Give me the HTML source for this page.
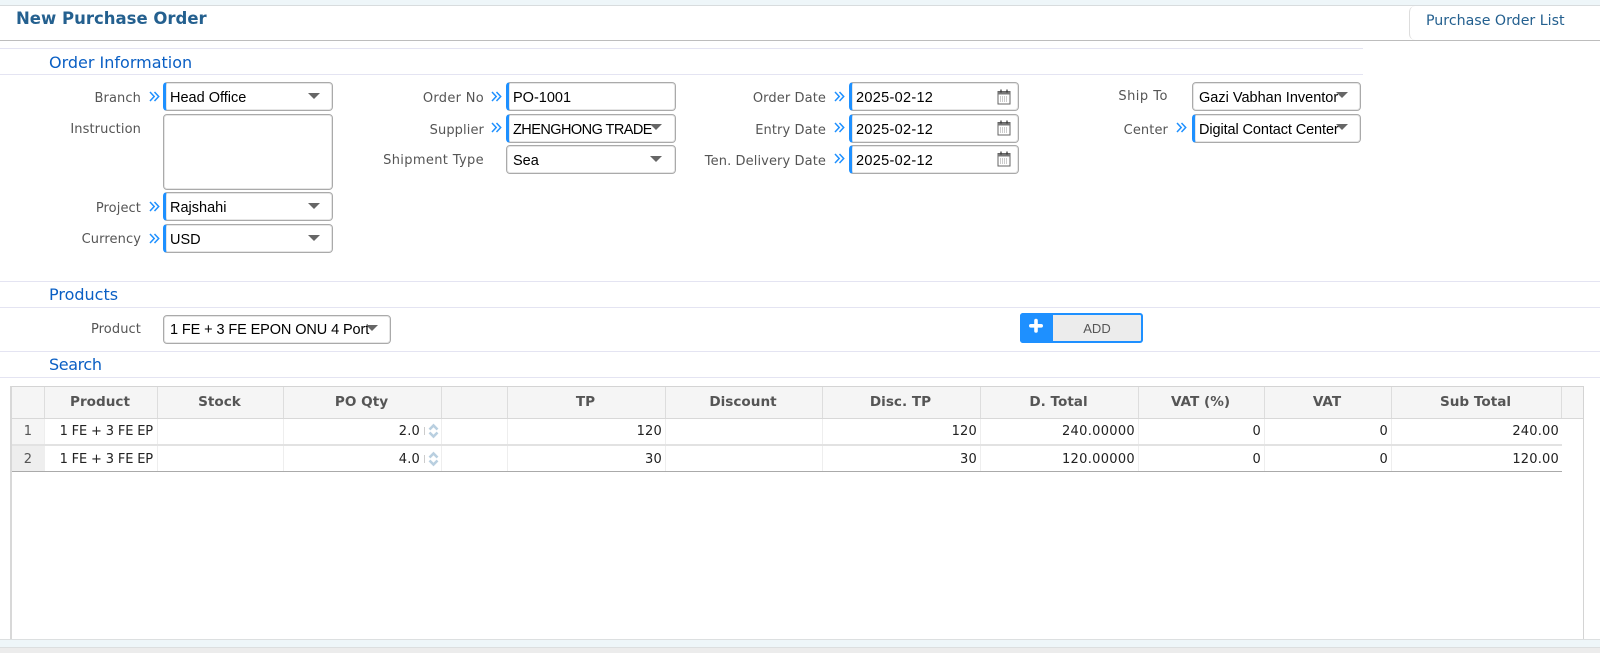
<!DOCTYPE html>
<html><head><meta charset="utf-8"><style>
html,body{margin:0;padding:0;width:1600px;height:653px;overflow:hidden;background:#fff}
div,span,svg{position:absolute;box-sizing:border-box}
.l{font:13px "DejaVu Sans",sans-serif;color:#555;text-align:right;white-space:nowrap;height:16px;line-height:16px;letter-spacing:.1px}
.hr{height:1px;background:#e4e4f2;left:0;width:1363px}
.sec{font:16px "DejaVu Sans",sans-serif;color:#0a5fc4;left:49px;white-space:nowrap;line-height:18px;height:18px}
.s{background:#fff;border:1px solid #aaa;border-radius:4px;box-shadow:inset 0 0 0 1px #e6e6e6;height:29px;font:14.5px "Liberation Sans",sans-serif;color:#000;line-height:30px;padding-left:6px;white-space:nowrap;overflow:hidden}
.r{border-left:3px solid #1e90ff;padding-left:4px}
.c{width:0;height:0;border-left:6.5px solid transparent;border-right:6.5px solid transparent;border-top:6px solid #666}
.a{width:11px;height:11px}
.th{top:387px;height:31px;font:bold 13.6px "DejaVu Sans",sans-serif;color:#555;text-align:center;line-height:31px;background:#f5f5f5;border-right:1px solid #ddd;padding-right:2px}
.td{height:25px;font:13px "DejaVu Sans",sans-serif;color:#222;line-height:25px;text-align:right;padding-right:3px;border-right:1px solid #eee;white-space:nowrap;overflow:hidden;letter-spacing:.2px}
.d{letter-spacing:.3px}
.p{letter-spacing:-.15px;padding-right:4px}
</style></head><body>
<svg width="0" height="0" style="position:absolute"><defs>
<symbol id="ar" viewBox="0 0 11 11"><path d="M1 1L5.2 5.5L1 10M5.5 1L9.7 5.5L5.5 10" fill="none" stroke="#1e90ff" stroke-width="1.5"/></symbol>
<symbol id="cal" viewBox="0 0 14 16"><path d="M1 2.5H13V15H1Z" fill="#fff" stroke="#666" stroke-width="1"/><path d="M1 3H13V5.5H1Z" fill="#777"/><path d="M4 .5V3.5M10 .5V3.5" stroke="#333" stroke-width="1.2"/><path d="M3 8H11M3 10H11M3 12H11" stroke="#999" stroke-width="1" stroke-dasharray="1 1"/></symbol>
<symbol id="sp" viewBox="0 0 11 16"><path d="M1.5 6.5L5.5 2.5L9.5 6.5M1.5 9.5L5.5 13.5L9.5 9.5" fill="none" stroke="#b9cfe0" stroke-width="2.6"/></symbol>
</defs></svg>

<!-- top strip and header -->
<div style="left:0;top:0;width:1600px;height:5px;background:#eef6f9"></div>
<div style="left:0;top:5px;width:1600px;height:1px;background:#d8dcde"></div>
<div style="left:0;top:40px;width:1600px;height:1px;background:#bdbdbd"></div>
<div style="left:16px;top:9px;font:bold 16.5px 'DejaVu Sans',sans-serif;color:#24608f;white-space:nowrap;line-height:20px;height:20px">New Purchase Order</div>
<div style="left:1409px;top:6px;width:191px;height:34px;border-left:1px solid #ddd;border-radius:6px 0 0 6px"></div>
<div style="left:1426px;top:12px;font:14.2px 'DejaVu Sans',sans-serif;color:#24608f;white-space:nowrap;line-height:18px;height:18px">Purchase Order List</div>

<!-- Order information -->
<div class="hr" style="top:48px"></div>
<div class="sec" style="top:54px">Order Information</div>
<div class="hr" style="top:74px"></div>

<div class="l" style="right:1459px;top:91px">Branch</div>
<svg class="a" style="left:149px;top:91px"><use href="#ar"/></svg>
<div class="s r" style="left:163px;top:82px;width:170px">Head Office</div>
<div class="c" style="left:308px;top:93px"></div>

<div class="l" style="right:1459px;top:122px">Instruction</div>
<div class="s" style="left:163px;top:114px;width:170px;height:76px"></div>

<div class="l" style="right:1459px;top:201px">Project</div>
<svg class="a" style="left:149px;top:201px"><use href="#ar"/></svg>
<div class="s r" style="left:163px;top:192px;width:170px">Rajshahi</div>
<div class="c" style="left:308px;top:203px"></div>

<div class="l" style="right:1459px;top:232px">Currency</div>
<svg class="a" style="left:149px;top:233px"><use href="#ar"/></svg>
<div class="s r" style="left:163px;top:224px;width:170px">USD</div>
<div class="c" style="left:308px;top:235px"></div>

<div class="l" style="right:1116px;top:91px;letter-spacing:.3px">Order No</div>
<svg class="a" style="left:491px;top:91px"><use href="#ar"/></svg>
<div class="s r" style="left:506px;top:82px;width:170px">PO-1001</div>

<div class="l" style="right:1116px;top:123px">Supplier</div>
<svg class="a" style="left:491px;top:122px"><use href="#ar"/></svg>
<div class="s r" style="left:506px;top:114px;width:170px;letter-spacing:-.55px">ZHENGHONG TRADE</div>
<div class="c" style="left:650px;top:124px"></div>

<div class="l" style="right:1116px;top:153px;letter-spacing:.35px">Shipment Type</div>
<div class="s" style="left:506px;top:145px;width:170px">Sea</div>
<div class="c" style="left:650px;top:156px"></div>

<div class="l" style="right:774px;top:91px">Order Date</div>
<svg class="a" style="left:834px;top:91px"><use href="#ar"/></svg>
<div class="s r d" style="left:849px;top:82px;width:170px">2025-02-12</div>
<svg style="left:997px;top:89px" width="14" height="16"><use href="#cal"/></svg>

<div class="l" style="right:774px;top:123px">Entry Date</div>
<svg class="a" style="left:834px;top:122px"><use href="#ar"/></svg>
<div class="s r d" style="left:849px;top:114px;width:170px">2025-02-12</div>
<svg style="left:997px;top:120px" width="14" height="16"><use href="#cal"/></svg>

<div class="l" style="right:774px;top:154px">Ten. Delivery Date</div>
<svg class="a" style="left:834px;top:153px"><use href="#ar"/></svg>
<div class="s r d" style="left:849px;top:145px;width:170px">2025-02-12</div>
<svg style="left:997px;top:151px" width="14" height="16"><use href="#cal"/></svg>

<div class="l" style="right:432px;top:89px;letter-spacing:.5px">Ship To</div>
<div class="s" style="left:1192px;top:82px;width:169px">Gazi Vabhan Inventor</div>
<div class="c" style="left:1336px;top:92px"></div>

<div class="l" style="right:432px;top:123px">Center</div>
<svg class="a" style="left:1176px;top:122px"><use href="#ar"/></svg>
<div class="s r" style="left:1192px;top:114px;width:169px;letter-spacing:-.1px">Digital Contact Center</div>
<div class="c" style="left:1336px;top:124px"></div>

<!-- Products -->
<div class="hr" style="top:281px;width:1600px"></div>
<div class="sec" style="top:286px">Products</div>
<div class="hr" style="top:307px;width:1600px"></div>
<div class="l" style="right:1459px;top:322px">Product</div>
<div class="s" style="left:163px;top:315px;width:228px;letter-spacing:-.1px;line-height:28px">1 FE + 3 FE EPON ONU 4 Port</div>
<div class="c" style="left:366px;top:325px"></div>

<div style="left:1020px;top:313px;width:123px;height:30px;background:#ececec;border:2px solid #1e90ff;border-radius:3px"></div>
<div style="left:1020px;top:313px;width:33px;height:30px;background:#1e90ff;border-radius:3px 0 0 3px"></div>
<svg style="left:1028px;top:318px" width="16" height="16"><path d="M8 2.5V13M2.8 7.8H13.2" stroke="#fff" stroke-width="3.6" stroke-linecap="round"/></svg>
<div style="left:1053px;top:315px;width:88px;height:26px;text-align:center;font:13px/27px 'Liberation Sans',sans-serif;color:#555">ADD</div>

<div class="hr" style="top:351px;width:1600px"></div>
<div class="sec" style="top:356px;letter-spacing:-.4px">Search</div>
<div class="hr" style="top:377px;width:1600px"></div>

<!-- Table -->
<div style="left:10px;top:386px;width:1574px;height:253px;border:1px solid #d4d4d4;border-left:2px solid #d8d8d8;border-bottom:0;background:#fff"></div>
<div style="left:12px;top:387px;width:1571px;height:31px;background:#f5f5f5"></div>
<div style="left:12px;top:418px;width:1571px;height:1px;background:#d8d8d8"></div>

<div class="th" style="left:12px;width:33px"></div>
<div class="th" style="left:45px;width:113px">Product</div>
<div class="th" style="left:158px;width:126px">Stock</div>
<div class="th" style="left:284px;width:158px">PO Qty</div>
<div class="th" style="left:442px;width:66px"></div>
<div class="th" style="left:508px;width:158px">TP</div>
<div class="th" style="left:666px;width:157px">Discount</div>
<div class="th" style="left:823px;width:158px">Disc. TP</div>
<div class="th" style="left:981px;width:158px">D. Total</div>
<div class="th" style="left:1139px;width:126px">VAT (%)</div>
<div class="th" style="left:1265px;width:127px">VAT</div>
<div class="th" style="left:1392px;width:170px">Sub Total</div>

<!-- row 1 -->
<div class="td" style="left:12px;top:419px;width:33px;text-align:center;padding:0;background:#f5f5f5;color:#555">1</div>
<div class="td p" style="left:45px;top:419px;width:113px">1 FE + 3 FE EP</div>
<div class="td" style="left:158px;top:419px;width:126px"></div>
<div class="td" style="left:284px;top:419px;width:158px;padding-right:21px">2.0</div>
<div style="left:424px;top:427px;width:1px;height:8px;background:#ccc"></div>
<svg style="left:428px;top:423px" width="11" height="16"><use href="#sp"/></svg>
<div class="td" style="left:442px;top:419px;width:66px"></div>
<div class="td" style="left:508px;top:419px;width:158px">120</div>
<div class="td" style="left:666px;top:419px;width:157px"></div>
<div class="td" style="left:823px;top:419px;width:158px">120</div>
<div class="td" style="left:981px;top:419px;width:158px;letter-spacing:.3px">240.00000</div>
<div class="td" style="left:1139px;top:419px;width:126px">0</div>
<div class="td" style="left:1265px;top:419px;width:127px">0</div>
<div class="td" style="left:1392px;top:419px;width:170px;border:0">240.00</div>
<div style="left:12px;top:444px;width:1550px;height:2px;background:#e2e2e2"></div>

<!-- row 2 -->
<div class="td" style="left:12px;top:446px;width:33px;height:25px;text-align:center;padding:0;background:#eee;color:#555;line-height:27px">2</div>
<div class="td p" style="left:45px;top:446px;width:113px;line-height:27px">1 FE + 3 FE EP</div>
<div class="td" style="left:158px;top:446px;width:126px"></div>
<div class="td" style="left:284px;top:446px;width:158px;padding-right:21px;line-height:27px">4.0</div>
<div style="left:424px;top:455px;width:1px;height:8px;background:#ccc"></div>
<svg style="left:428px;top:451px" width="11" height="16"><use href="#sp"/></svg>
<div class="td" style="left:442px;top:446px;width:66px"></div>
<div class="td" style="left:508px;top:446px;width:158px;line-height:27px">30</div>
<div class="td" style="left:666px;top:446px;width:157px"></div>
<div class="td" style="left:823px;top:446px;width:158px;line-height:27px">30</div>
<div class="td" style="left:981px;top:446px;width:158px;line-height:27px;letter-spacing:.3px">120.00000</div>
<div class="td" style="left:1139px;top:446px;width:126px;line-height:27px">0</div>
<div class="td" style="left:1265px;top:446px;width:127px;line-height:27px">0</div>
<div class="td" style="left:1392px;top:446px;width:170px;border:0;line-height:27px">120.00</div>
<div style="left:12px;top:471px;width:1550px;height:1px;background:#aaa"></div>

<!-- bottom strip -->
<div style="left:0;top:639px;width:1600px;height:1px;background:#dcdfe0"></div>
<div style="left:0;top:640px;width:1600px;height:7px;background:#eef6f9"></div>
<div style="left:0;top:647px;width:1600px;height:1px;background:#dcdfe0"></div>
<div style="left:0;top:648px;width:1600px;height:5px;background:#ececec"></div>
</body></html>
